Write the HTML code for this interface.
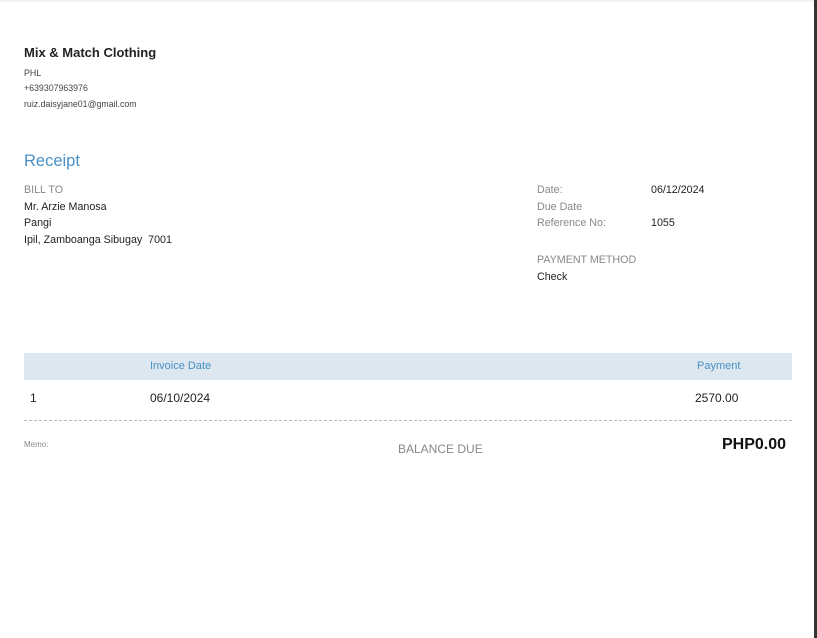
<!DOCTYPE html>
<html><head><style>
body{margin:0;width:817px;height:638px;background:#fff;position:relative;overflow:hidden;font-family:"Liberation Sans",Arial,sans-serif;color:#222}
div{position:absolute;white-space:nowrap}
.g{color:#888}
.s{font-size:10.7px}
</style></head><body>
<div style="left:0;top:0;width:817px;height:3px;background:linear-gradient(#eee,#fff)"></div>
<div style="left:814px;top:0;width:3px;height:638px;background:#333"></div>
<div style="left:24px;top:45px;font-size:13px;font-weight:bold;color:#222">Mix &amp; Match Clothing</div>
<div style="left:24px;top:68px;font-size:8.8px;color:#444">PHL</div>
<div style="left:24px;top:83px;font-size:8.8px;color:#444">+639307963976</div>
<div style="left:24px;top:99px;font-size:8.8px;color:#444">ruiz.daisyjane01@gmail.com</div>
<div style="left:24px;top:152px;font-size:16.5px;color:#4a90c4">Receipt</div>
<div class="s g" style="left:24px;top:184px">BILL TO</div>
<div class="s" style="left:24px;top:201px">Mr. Arzie Manosa</div>
<div class="s" style="left:24px;top:217px">Pangi</div>
<div class="s" style="left:24px;top:234px">Ipil, Zamboanga Sibugay&nbsp; 7001</div>
<div class="s g" style="left:537px;top:184px">Date:</div>
<div class="s" style="left:651px;top:184px">06/12/2024</div>
<div class="s g" style="left:537px;top:201px">Due Date</div>
<div class="s g" style="left:537px;top:217px">Reference No:</div>
<div class="s" style="left:651px;top:217px">1055</div>
<div class="s g" style="left:537px;top:254px">PAYMENT METHOD</div>
<div class="s" style="left:537px;top:271px">Check</div>
<div style="left:24px;top:353px;width:768px;height:27px;background:#dce7ef"></div>
<div style="left:150px;top:360px;font-size:11px;color:#4a90c4">Invoice Date</div>
<div style="left:697px;top:360px;font-size:11px;color:#4a90c4">Payment</div>
<div style="left:30px;top:391px;font-size:12px">1</div>
<div style="left:150px;top:391px;font-size:12px">06/10/2024</div>
<div style="left:695px;top:391px;font-size:12px">2570.00</div>
<div style="left:24px;top:420px;width:768px;border-top:1px dashed #bbb"></div>
<div class="g" style="left:24px;top:440px;font-size:8px">Memo:</div>
<div class="g" style="left:398px;top:442px;font-size:12px">BALANCE DUE</div>
<div style="left:722px;top:436px;font-size:16px;font-weight:bold;color:#111">PHP0.00</div>
</body></html>
